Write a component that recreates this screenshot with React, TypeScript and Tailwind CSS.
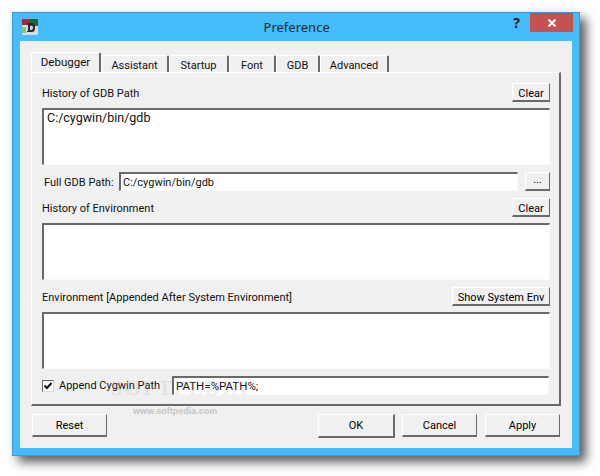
import type { ReactNode } from 'react';

const TABS = [
  { label: 'Assistant', width: 'w-[68px]' },
  { label: 'Startup', width: 'w-[60px]' },
  { label: 'Font', width: 'w-[47px]' },
  { label: 'GDB', width: 'w-[44px]' },
  { label: 'Advanced', width: 'w-[69px]' },
];

const Btn = ({ children, className = '' }: { children: ReactNode; className?: string }) => (
  <div
    className={`flex items-center justify-center border border-t-white border-l-white border-r-[#696969] border-b-2 border-b-[#696969] bg-[#f0f0f0] text-black ${className}`}
  >
    {children}
  </div>
);

const Sunken = ({ children, className = '' }: { children?: ReactNode; className?: string }) => (
  <div
    className={`border-t-2 border-l-2 border-r border-b border-t-[#696969] border-l-[#696969] border-r-[#fafafa] border-b-[#fafafa] bg-white ${className}`}
  >
    {children}
  </div>
);

const LabelRow = ({ label, button, buttonClass }: { label: string; button: string; buttonClass: string }) => (
  <div className="flex h-[19px] items-center justify-between">
    <span className="pt-[2px]">{label}</span>
    <Btn className={`pt-[2px] ${buttonClass}`}>{button}</Btn>
  </div>
);

export default function App() {
  return (
    <div className="h-[476px] w-[600px] overflow-hidden bg-white pl-3 pt-3 font-['Roboto',sans-serif] text-[11px] leading-none text-[#111]">
      <div className="relative flex h-[444px] w-[568px] flex-col border border-[#3a9bd0] bg-[#47bcfa] shadow-[6px_6px_10px_rgba(0,0,0,0.65)]">
        {/* title bar */}
        <div className="flex h-[28px] shrink-0 items-start">
          <svg className="ml-[9px] mt-[6px] shrink-0" width="16" height="16" viewBox="0 0 16 16">
            <rect width="16" height="16" fill="#d8dcd8" />
            <rect width="8" height="6" fill="#a52a3c" />
            <rect x="8" width="8" height="7" fill="#1f6b2c" />
            <rect y="8" width="4" height="6" fill="#7fc48a" />
            <path d="M5 4h5q3 0 3 4.500t-3 4.500h-5v-1h1v-7h-1z M8 6v5h1q2 0 2-2.500t-2-2.500z" fill="#2d2440" fillRule="evenodd" />
          </svg>
          <div className="flex-1 pl-[42px] pt-[8px] text-center font-['Noto_Sans',sans-serif] text-[13px] text-[#1c2b33]">Preference</div>
          <div className="mr-[10px] mt-[3px] font-['Noto_Sans',sans-serif] text-[14px] font-bold text-[#222]">?</div>
          <div className="mr-[6px] flex h-[19px] w-[43px] items-center justify-center bg-[#c75050]">
            <svg width="10" height="10" viewBox="0 0 10 10">
              <path d="M1.500 1.500l7 7M8.500 1.500l-7 7" stroke="#fff" strokeWidth="2" />
            </svg>
          </div>
        </div>

        {/* client area */}
        <div className="mx-[7px] mb-[7px] flex min-h-0 flex-1 flex-col bg-[#f0f0f0] px-[11px] pt-[12px]">
          <div className="flex h-[19px] items-end">
            <div className="flex h-[20px] w-[70px] items-center justify-center rounded-t-[2px] border-t border-l border-white border-r-2 border-r-[#696969] pt-[1px] text-[11.5px]">
              Debugger
            </div>
            {TABS.map((tab) => (
              <div
                key={tab.label}
                className={`flex h-[17px] items-center justify-center rounded-t-[2px] border-t border-l border-t-white border-l-white border-r-2 border-r-[#696969] pt-[2px] ${tab.width}`}
              >
                {tab.label}
              </div>
            ))}
          </div>

          {/* tab pane */}
          <div className="flex h-[334px] w-[530px] flex-col border-t border-l border-t-white border-l-white border-r-2 border-b-2 border-r-[#696969] border-b-[#696969] pl-[10px] pr-[9px] pt-[10px]">
            <LabelRow label="History of GDB Path" button="Clear" buttonClass="h-[19px] w-[38px]" />
            <Sunken className="mt-[6px] h-[57px] px-[3px] pt-[2px] text-[12.5px]">C:/cygwin/bin/gdb</Sunken>

            <div className="mt-[7px] flex h-[19px] items-center">
              <span className="ml-[2px] w-[75px] pt-[1px]">Full GDB Path:</span>
              <Sunken className="flex h-[19px] w-[399px] items-center px-[2px] pt-[1px]">C:/cygwin/bin/gdb</Sunken>
              <Btn className="ml-[7px] h-[19px] w-[25px] pb-[4px]">...</Btn>
            </div>

            <div className="mt-[7px]">
              <LabelRow label="History of Environment" button="Clear" buttonClass="h-[19px] w-[38px]" />
            </div>
            <Sunken className="mt-[6px] h-[57px]" />

            <div className="mt-[7px]">
              <LabelRow label="Environment [Appended After System Environment]" button="Show System Env" buttonClass="h-[19px] w-[98px]" />
            </div>
            <Sunken className="mt-[6px] h-[57px]" />

            <div className="mt-[7px] flex h-[19px] items-center">
              <div className="flex h-[12px] w-[12px] items-center justify-center border border-t-[#696969] border-l-[#696969] border-r-[#dcdcdc] border-b-[#dcdcdc] bg-white">
                <svg width="10" height="10" viewBox="0 0 10 10">
                  <path d="M1.500 4.500l2.500 2.500 4.500-5" fill="none" stroke="#111" strokeWidth="2" />
                </svg>
              </div>
              <span className="ml-[5px] w-[113px]">Append Cygwin Path</span>
              <Sunken className="flex h-[19px] w-[377px] items-center px-[2px] pt-[1px] text-[11.5px]">PATH=%PATH%;</Sunken>
            </div>
          </div>

          {/* dialog buttons */}
          <div className="mt-[8px] flex pr-[1px]">
            <Btn className="ml-[1px] h-[23px] w-[75px]">Reset</Btn>
            <Btn className="ml-[211px] h-[24px] w-[77px] border-[#696969] border-b-2 border-r-2">OK</Btn>
            <Btn className="ml-[7px] h-[23px] w-[75px]">Cancel</Btn>
            <Btn className="ml-[8px] h-[23px] w-[75px]">Apply</Btn>
          </div>
        </div>

        {/* softpedia watermark */}
        <div className="pointer-events-none absolute left-[98px] top-[365px] font-['Liberation_Serif',serif] text-[21px] font-bold tracking-[2px] text-[#9a9a9a] opacity-15">
          SOFTPEDIA
        </div>
        <div className="pointer-events-none absolute left-[120px] top-[394px] font-['Liberation_Sans',sans-serif] text-[9px] font-bold text-[#9a9a9a] opacity-50">
          www.softpedia.com
        </div>
      </div>
    </div>
  );
}
